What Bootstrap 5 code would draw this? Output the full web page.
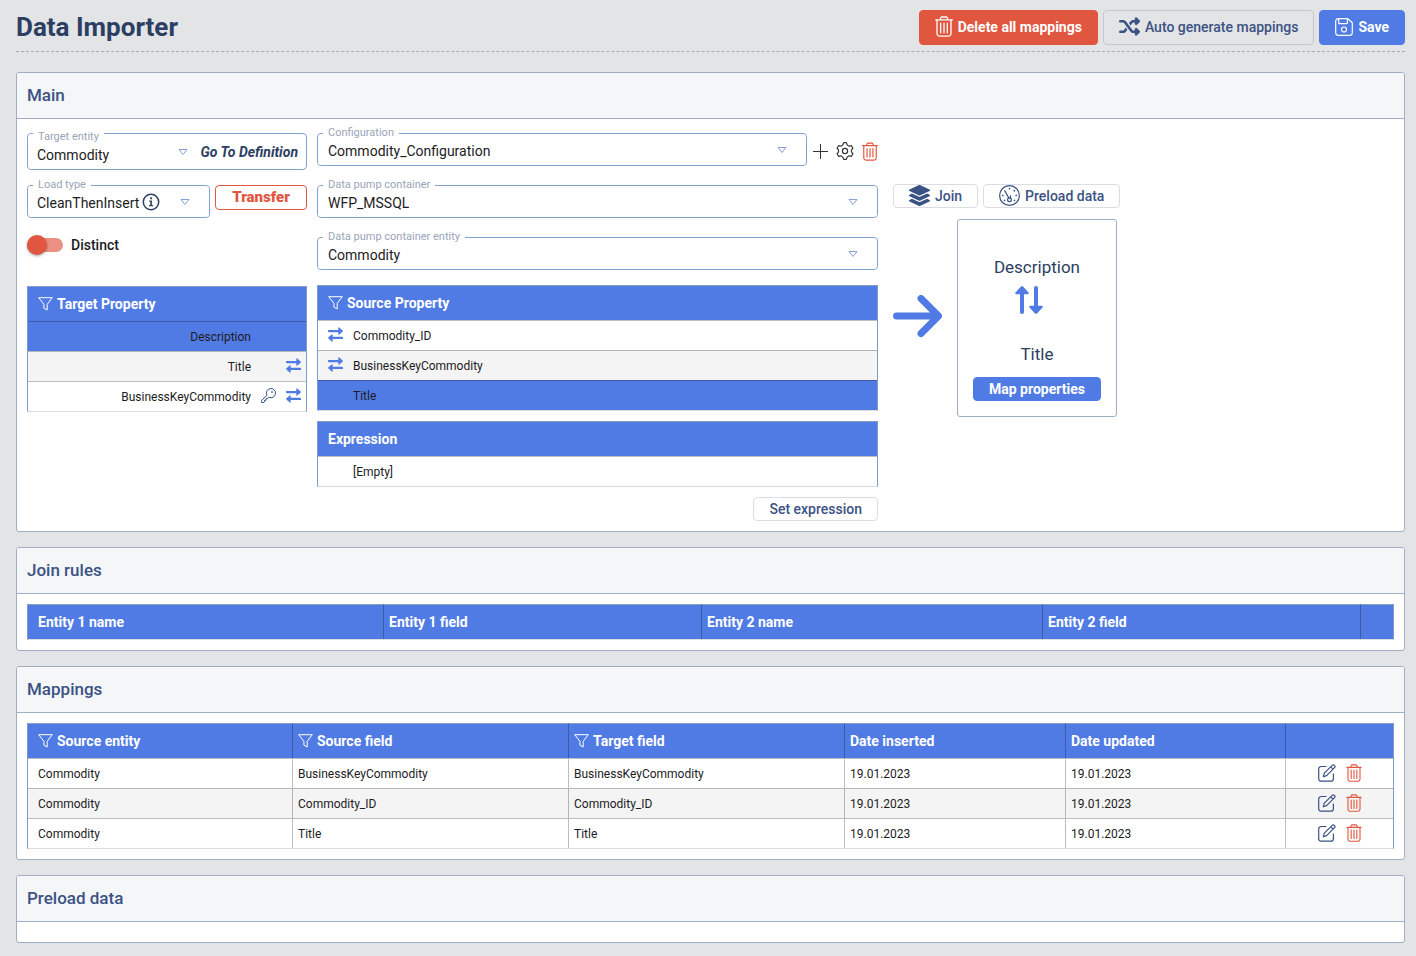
<!DOCTYPE html>
<html lang="en">
<head>
<meta charset="utf-8">
<meta name="viewport" content="width=device-width, initial-scale=1">
<title>Data Importer</title>
<link href="https://cdn.jsdelivr.net/npm/bootstrap@5.3.0/dist/css/bootstrap.min.css" rel="stylesheet">
<style>
  :root { --brand: #517be4; --danger: #e1563f; --navy: #2c3e62; --ink: #3b5284; --edge: #a0adc2; --field: #849fd2; }
  body { background: #e3e4e6; font-family: Roboto, "Liberation Sans", sans-serif; font-size: 14px; line-height: 20px; color: #1c1c1e; }
  svg { display: block; flex: none; }
  .page { padding: 10px 11px 13px 16px; }
  .page-head { border-bottom: 1px dashed #a9abae; padding-bottom: 6px; margin-bottom: 20px; }
  .page-head h1 { font-size: 26px; line-height: 35px; font-weight: 700; color: var(--navy); }

  .btn { --bs-btn-font-size: 14px; --bs-btn-font-weight: 500; --bs-btn-line-height: 22px; --bs-btn-padding-x: 15px; --bs-btn-padding-y: 0px; --bs-btn-border-radius: 4px; gap: 5px; }
  .btn-tall { --bs-btn-line-height: 33px; }
  .btn-tall svg { margin-bottom: 2px; }
  .btn-brand { --bs-btn-color: #fff; --bs-btn-bg: var(--brand); --bs-btn-border-color: var(--brand); --bs-btn-font-weight: 700; --bs-btn-hover-color: #fff; --bs-btn-hover-bg: #3f69d2; }
  .btn-alert { --bs-btn-color: #fff; --bs-btn-bg: var(--danger); --bs-btn-border-color: var(--danger); --bs-btn-font-weight: 700; --bs-btn-hover-color: #fff; --bs-btn-hover-bg: #c94630; }
  .btn-plain { --bs-btn-color: var(--ink); --bs-btn-border-color: #dcdde0; --bs-btn-hover-border-color: var(--ink); }
  .page-head .btn-plain { --bs-btn-border-color: #c6c8cb; }
  .btn-transfer { --bs-btn-color: var(--danger); --bs-btn-border-color: var(--danger); --bs-btn-font-size: 15px; --bs-btn-font-weight: 900; --bs-btn-padding-x: 16px; --bs-btn-hover-color: var(--danger); }
  .icon-btn { border: 0; padding: 0; background: none; color: #333; }
  .icon-btn.red { color: var(--danger); }
  .icon-btn.blue { color: var(--ink); }

  .card { --bs-card-border-color: var(--edge); --bs-card-border-radius: 3px; --bs-card-inner-border-radius: 2px; --bs-card-cap-bg: #f5f6f8; --bs-card-cap-padding-x: 10px; --bs-card-cap-padding-y: 0px; --bs-card-spacer-x: 10px; --bs-card-spacer-y: 10px; margin-bottom: 15px; }
  .card-header h2 { font-size: 17px; line-height: 45px; font-weight: 500; color: var(--ink); margin: 0; }

  .main-grid { display: grid; grid-template-columns: 280px minmax(0, 561fr) minmax(0, 506fr); column-gap: 10px; }
  .main-grid > div { padding-top: 4px; }
  .main-grid > .flow-col { padding: 55px 0 0 5px; }
  .load-row { display: grid; grid-template-columns: minmax(0, 1fr) 92px; gap: 5px; align-items: start; margin-top: 15px; }
  .load-row .btn { --bs-btn-padding-x: 0px; --bs-btn-line-height: 23px; }

  .field { position: relative; border: 1px solid var(--field); border-radius: 4px; display: flex; align-items: center; height: 33px; }
  .field label { position: absolute; left: 5px; top: -7px; padding: 0 5px; background: #fff; font-size: 11px; line-height: 12px; color: #9aa5b9; white-space: nowrap; z-index: 1; }
  .field select { appearance: none; border: 0; outline: 0; flex: 1; min-width: 0; height: 31px; padding: 3px 34px 0 10px; border-radius: 4px; color: #1c1c1e;
    background: #fff url("data:image/svg+xml,%3Csvg xmlns='http://www.w3.org/2000/svg' width='10' height='8'%3E%3Cpath d='M1 1.500h8L5 6.500z' fill='none' stroke='%2386a0d6' stroke-linejoin='round'/%3E%3C/svg%3E") no-repeat right 19px center; }
  .field-tall { height: 37px; }
  .field-tall label { top: -3px; }
  .field-tall select { height: 35px; padding: 7px 16px 0 9px; background-position: right 1px center; }
  .field-tall a { font-weight: 700; font-style: italic; color: var(--navy); text-decoration: none; padding: 0 8px 0 12px; white-space: nowrap; }
  .load-row .field select { padding-left: 9px; }
  .info-mark { position: absolute; left: 114px; top: 7px; color: var(--navy); }

  .toggle { appearance: none; position: relative; width: 36px; height: 20px; margin: 0; flex: none; cursor: pointer; }
  .toggle::before { content: ""; position: absolute; inset: 3px 0; border-radius: 7px; background: #ea9084; }
  .toggle::after { content: ""; position: absolute; left: 0; top: 0; width: 20px; height: 20px; border-radius: 50%; background: var(--danger); box-shadow: 0 1px 3px rgba(0,0,0,.35); }
  .toggle:checked::after { left: 16px; }

  .grid-table { width: 100%; table-layout: fixed; border-collapse: separate; border-spacing: 0; border: solid #8199cb; border-width: 0 1px; border-bottom: 1px solid #dcdcdc; font-size: 12px; }
  .grid-table th { height: 35px; background: var(--brand); color: #fff; font-size: 14px; font-weight: 700; padding: 0 5px; border-top: 1px solid #8b9ec4; }
  .grid-table td { height: 30px; padding: 0 5px; border-top: 1px solid rgba(0,0,0,.26); background: #fff; }
  .grid-table th + th, .grid-table td + td { border-left: 1px solid rgba(0,0,0,.26); }
  .grid-table th:first-child, .grid-table td:first-child { padding-left: 10px; }
  .grid-table tbody tr:nth-child(even) td { background: #f4f4f4; }
  .grid-table tbody tr.picked td { background: var(--brand); }
  .grid-table td svg { margin-bottom: 2px; }
  .th-label { display: flex; align-items: center; gap: 4px; }
  .th-label svg { margin-bottom: 1px; }
  .slot { width: 15px; flex: none; color: var(--brand); }
  .slot.key { color: var(--ink); }

  .pair-box { border: 1px solid var(--edge); border-radius: 3px; padding: 37px 15px 15px; font-size: 17px; color: var(--navy); text-align: center; }
</style>
</head>
<body>
<svg class="d-none" aria-hidden="true">
  <symbol id="i-trash" viewBox="0 0 18 21"><g fill="none" stroke="currentColor" stroke-width="1.3" stroke-linecap="round" stroke-linejoin="round"><path d="M.7 3.900h16.600M5 3.700l.7-1.800Q6 1 7 1h4q1 0 1.300.900L13 3.700M2 4v13.500a2.700 2.700 0 0 0 2.700 2.700h8.600a2.700 2.700 0 0 0 2.700-2.700V4M5.700 7.200v9.600M9 7.200v9.600M12.300 7.200v9.600"/></g></symbol>
  <symbol id="i-funnel" viewBox="0 0 15 14"><path d="M.7.700h13.600L9.200 7.300v5.700l-3.300-1.800V7.300z" fill="none" stroke="currentColor" stroke-linejoin="round"/></symbol>
  <symbol id="i-swap" viewBox="0 0 15 15"><path d="M.9 3H10.300V1.100q0-1.300 1-.5L14.600 3.500q.6.600 0 1.200L11.300 7.400q-1 .700-1-.500V5.200H.9a1.100 1.100 0 0 1 0-2.200zM14.100 9.800H4.700V8q0-1.200-1-.500L.4 10.300q-.6.600 0 1.200l3.300 2.900q1 .800 1-.500V12h9.400a1.100 1.100 0 0 0 0-2.200z" fill="currentColor"/></symbol>
  <symbol id="i-edit" viewBox="0 0 18 18"><g fill="none" stroke="currentColor" stroke-width="1.200" stroke-linecap="round" stroke-linejoin="round"><path d="M8 2.500H3.200A2.500 2.500 0 0 0 .7 5v9.700a2.500 2.500 0 0 0 2.500 2.500h9.700a2.500 2.500 0 0 0 2.500-2.500V10M5.300 12.800l1-3.600 7.900-7.900q1-1 2.200.1 1.200 1.200.1 2.300l-7.900 7.900zM12.800 2.800l2.300 2.300"/></g></symbol>
</svg>

<div class="page">
  <header class="page-head d-flex flex-wrap justify-content-between">
    <h1 class="m-0">Data Importer</h1>
    <div class="d-flex flex-wrap" style="gap:5px">
      <button type="button" class="btn btn-alert btn-tall d-inline-flex align-items-center"><svg width="18" height="21" aria-hidden="true"><use href="#i-trash"/></svg>Delete all mappings</button>
      <button type="button" class="btn btn-plain btn-tall d-inline-flex align-items-center"><svg width="21" height="21" viewBox="0 0 512 512" fill="currentColor" aria-hidden="true"><path d="M403.800 34.400c12-5 25.700-2.200 34.900 6.900l64 64c6 6 9.400 14.100 9.400 22.600s-3.400 16.600-9.400 22.600l-64 64c-9.200 9.200-22.900 11.900-34.900 6.900s-19.800-16.600-19.800-29.600V160H352c-10.100 0-19.600 4.700-25.600 12.800L284 229.300 244 176l31.200-41.600C293.300 110.200 321.800 96 352 96h32V64c0-12.900 7.800-24.600 19.800-29.600zM164 282.700L204 336l-31.200 41.600C154.700 401.800 126.200 416 96 416H32c-17.700 0-32-14.300-32-32s14.300-32 32-32H96c10.100 0 19.600-4.700 25.600-12.800L164 282.700zm274.600 188c-9.200 9.200-22.900 11.900-34.900 6.900s-19.800-16.600-19.800-29.600V416H352c-30.200 0-58.700-14.200-76.800-38.400L121.600 172.800c-6-8.100-15.500-12.800-25.600-12.800H32c-17.700 0-32-14.300-32-32s14.300-32 32-32H96c30.200 0 58.700 14.200 76.800 38.400L326.400 339.200c6 8.100 15.500 12.800 25.600 12.800h32V320c0-12.900 7.800-24.600 19.800-29.600s25.700-2.200 34.900 6.900l64 64c6 6 9.400 14.100 9.400 22.600s-3.400 16.600-9.400 22.600l-64 64z"/></svg>Auto generate mappings</button>
      <button type="button" class="btn btn-brand btn-tall d-inline-flex align-items-center"><svg width="18" height="18" viewBox="0 0 18 18" fill="none" stroke="currentColor" stroke-width="1.200" stroke-linejoin="round" aria-hidden="true"><path d="M3.200.7h9.600l4.500 4v10.100a2.500 2.500 0 0 1-2.500 2.500H3.200a2.500 2.500 0 0 1-2.500-2.500V3.200A2.500 2.500 0 0 1 3.200.7zM3.700.900v3.900q0 .9.900.9h6.900q.9 0 .9-.9V.900"/><circle cx="9" cy="11.500" r="2.500"/></svg>Save</button>
    </div>
  </header>

  <section class="card">
    <div class="card-header"><h2>Main</h2></div>
    <div class="card-body main-grid">
      <div>
        <div class="field field-tall">
          <label for="target">Target entity</label>
          <select id="target"><option>Commodity</option></select>
          <a href="#definition">Go To Definition</a>
        </div>
        <div class="load-row">
          <div class="field">
            <label for="load">Load type</label>
            <select id="load"><option>CleanThenInsert</option></select>
            <svg class="info-mark" width="18" height="18" viewBox="0 0 18 18" aria-hidden="true"><circle cx="9" cy="9" r="7.700" fill="none" stroke="currentColor" stroke-width="1.500"/><path d="M7.200 7.500h2.700v4.600h1.200v1.200H7v-1.200h1.300V8.700H7.200z" fill="currentColor"/><circle cx="9.100" cy="5.300" r="1.100" fill="currentColor"/></svg>
          </div>
          <button type="button" class="btn btn-transfer">Transfer</button>
        </div>
        <div class="d-flex align-items-center" style="height:24px;gap:8px;margin:15px 0 29px">
          <input type="checkbox" role="switch" class="toggle" id="distinct">
          <label for="distinct" style="font-weight:500">Distinct</label>
        </div>
        <table class="grid-table">
          <thead><tr><th><span class="th-label"><svg width="15" height="14" aria-hidden="true"><use href="#i-funnel"/></svg>Target Property</span></th></tr></thead>
          <tbody>
            <tr class="picked"><td><div class="d-flex justify-content-end align-items-center" style="gap:10px">Description<span class="slot"></span><span class="slot"></span></div></td></tr>
            <tr><td><div class="d-flex justify-content-end align-items-center" style="gap:10px">Title<span class="slot"></span><span class="slot"><svg width="15" height="15" aria-hidden="true"><use href="#i-swap"/></svg></span></div></td></tr>
            <tr><td><div class="d-flex justify-content-end align-items-center" style="gap:10px">BusinessKeyCommodity<span class="slot key"><svg width="15" height="15" viewBox="0 0 15 15" fill="none" stroke="currentColor" stroke-linejoin="round" aria-hidden="true"><path d="M5.900 7.300A4.600 4.600 0 1 1 8 9.300L6.600 10.600H5v1.700H3.500v1.600l-.6.600H.6v-2.100z"/><circle cx="11" cy="4" r=".5"/></svg></span><span class="slot"><svg width="15" height="15" aria-hidden="true"><use href="#i-swap"/></svg></span></div></td></tr>
          </tbody>
        </table>
      </div>

      <div>
        <div class="d-flex align-items-center">
          <div class="field flex-fill">
            <label for="config">Configuration</label>
            <select id="config"><option>Commodity_Configuration</option></select>
          </div>
          <div class="d-flex align-items-center" style="gap:8px;margin-left:6px;padding-top:3px">
            <button type="button" class="icon-btn" aria-label="Add"><svg width="15" height="15" viewBox="0 0 15 15" stroke="currentColor"><path d="M7.500 0v15M0 7.500h15"/></svg></button>
            <button type="button" class="icon-btn" aria-label="Settings"><svg width="18" height="18" viewBox="0 0 18 18" fill="none" stroke="currentColor" stroke-width="1.200" stroke-linejoin="round"><path d="M7.700.7h2.600q.6 2.500 1.900 3.100 1.100.600 3.100-.3l1.600 2.700Q15.300 7.700 15.300 9t1.600 2.800l-1.600 2.700q-2-.9-3.100-.3-1.300.600-1.900 3.100H7.700q-.6-2.500-1.900-3.100-1.100-.600-3.100.3l-1.600-2.700Q2.700 10.300 2.700 9T1.100 6.200l1.600-2.700q2 .9 3.100.3Q7.100 3.200 7.700.7z"/><circle cx="9" cy="9" r="2.600"/></svg></button>
            <button type="button" class="icon-btn red" aria-label="Delete configuration"><svg width="16" height="19"><use href="#i-trash"/></svg></button>
          </div>
        </div>
        <div class="field" style="margin-top:19px">
          <label for="container">Data pump container</label>
          <select id="container"><option>WFP_MSSQL</option></select>
        </div>
        <div class="field" style="margin:19px 0 15px">
          <label for="entity">Data pump container entity</label>
          <select id="entity"><option>Commodity</option></select>
        </div>
        <table class="grid-table">
          <thead><tr><th><span class="th-label"><svg width="15" height="14" aria-hidden="true"><use href="#i-funnel"/></svg>Source Property</span></th></tr></thead>
          <tbody>
            <tr><td><div class="d-flex align-items-center" style="gap:10px"><span class="slot"><svg width="15" height="15" aria-hidden="true"><use href="#i-swap"/></svg></span>Commodity_ID</div></td></tr>
            <tr><td><div class="d-flex align-items-center" style="gap:10px"><span class="slot"><svg width="15" height="15" aria-hidden="true"><use href="#i-swap"/></svg></span>BusinessKeyCommodity</div></td></tr>
            <tr class="picked"><td><div class="d-flex align-items-center" style="gap:10px"><span class="slot"></span>Title</div></td></tr>
          </tbody>
        </table>
        <table class="grid-table" style="margin:10px 0">
          <thead><tr><th>Expression</th></tr></thead>
          <tbody><tr><td><div class="d-flex" style="gap:10px"><span class="slot"></span>[Empty]</div></td></tr></tbody>
        </table>
        <div class="d-flex justify-content-end"><button type="button" class="btn btn-plain">Set expression</button></div>
      </div>

      <div class="flow-col">
        <div class="d-flex flex-wrap" style="gap:5px;margin-bottom:11px">
          <button type="button" class="btn btn-plain d-inline-flex"><svg width="21" height="21" viewBox="0 0 512 512" fill="currentColor" aria-hidden="true"><path d="M12.410 148.020l232.940 105.670c6.800 3.090 14.490 3.090 21.290 0l232.940-105.670c16.550-7.510 16.550-32.520 0-40.030L266.650 2.310a25.607 25.607 0 0 0-21.290 0L12.410 107.980c-16.550 7.510-16.550 32.530 0 40.040zm487.180 88.280l-58.090-26.330-161.640 73.270c-7.560 3.430-15.590 5.170-23.860 5.170s-16.290-1.740-23.860-5.170L70.510 209.970l-58.100 26.330c-16.550 7.500-16.550 32.500 0 40l232.940 105.590c6.800 3.080 14.490 3.080 21.290 0L499.590 276.300c16.550-7.500 16.550-32.500 0-40zm0 127.800l-57.870-26.230-161.860 73.370c-7.560 3.430-15.590 5.170-23.860 5.170s-16.290-1.740-23.860-5.170L70.290 337.870 12.410 364.100c-16.550 7.500-16.550 32.500 0 40l232.940 105.590c6.800 3.080 14.490 3.080 21.290 0L499.590 404.100c16.550-7.500 16.550-32.500 0-40z"/></svg>Join</button>
          <button type="button" class="btn btn-plain d-inline-flex"><svg width="21" height="21" viewBox="0 0 21 21" fill="none" stroke="currentColor" stroke-linecap="round" aria-hidden="true"><circle cx="10.500" cy="10.500" r="9.900" stroke-width="1.200"/><circle cx="10.500" cy="14.800" r="1.900" stroke-width="1.200"/><path d="M9.800 13 5.800 5.800M11.300 13l.3-2" stroke-width="1.300"/><path d="M10.500 3.600v.2M15.300 5.600l-.2.200M17.400 10.500h-.3M3.600 10.500h.3M15.400 15.300l.1.100M5.500 15.400l.1-.1" stroke-width="1.600"/></svg>Preload data</button>
        </div>
        <div class="d-flex align-items-center" style="gap:15px">
          <svg width="49" height="46" viewBox="0 0 49 46" fill="none" stroke="#517be4" stroke-width="7" stroke-linecap="round" stroke-linejoin="round" aria-hidden="true"><path d="M3.500 21H45M28 3.500 45.500 21 28 38.500"/></svg>
          <div class="pair-box">
            <div>Description</div>
            <svg class="mx-auto" style="margin-top:9px" width="43" height="28" viewBox="0 0 43 28" aria-hidden="true"><path d="M6 .5q1-.9 2 0l5.500 5.900q1 1.600-.8 1.800H9V26a2 2 0 0 1-4 0V8.200H1.300Q-.5 8 .5 6.400zM20 27.500q1 .9 2 0l5.500-5.900q1-1.600-.8-1.800H23V2a2 2 0 0 0-4 0v17.800h-3.700q-1.800.2-.8 1.800z" fill="#517be4"/></svg>
            <div style="margin:30px 0 13px">Title</div>
            <button type="button" class="btn btn-brand">Map properties</button>
          </div>
        </div>
      </div>
    </div>
  </section>

  <section class="card">
    <div class="card-header"><h2>Join rules</h2></div>
    <div class="card-body">
      <table class="grid-table">
        <colgroup><col style="width:355px"><col style="width:318px"><col style="width:341px"><col style="width:318px"><col style="width:33px"></colgroup>
        <thead><tr><th>Entity 1 name</th><th>Entity 1 field</th><th>Entity 2 name</th><th>Entity 2 field</th><th></th></tr></thead>
      </table>
    </div>
  </section>

  <section class="card">
    <div class="card-header"><h2>Mappings</h2></div>
    <div class="card-body">
      <table class="grid-table">
        <colgroup><col style="width:264px"><col style="width:276px"><col style="width:276px"><col style="width:221px"><col style="width:220px"><col style="width:108px"></colgroup>
        <thead><tr>
          <th><span class="th-label"><svg width="15" height="14" aria-hidden="true"><use href="#i-funnel"/></svg>Source entity</span></th>
          <th><span class="th-label"><svg width="15" height="14" aria-hidden="true"><use href="#i-funnel"/></svg>Source field</span></th>
          <th><span class="th-label"><svg width="15" height="14" aria-hidden="true"><use href="#i-funnel"/></svg>Target field</span></th>
          <th>Date inserted</th><th>Date updated</th><th></th>
        </tr></thead>
        <tbody>
          <tr><td>Commodity</td><td>BusinessKeyCommodity</td><td>BusinessKeyCommodity</td><td>19.01.2023</td><td>19.01.2023</td>
            <td><div class="d-flex justify-content-center" style="gap:10px"><button type="button" class="icon-btn blue" aria-label="Edit"><svg width="18" height="18"><use href="#i-edit"/></svg></button><button type="button" class="icon-btn red" aria-label="Delete"><svg width="16" height="18"><use href="#i-trash"/></svg></button></div></td></tr>
          <tr><td>Commodity</td><td>Commodity_ID</td><td>Commodity_ID</td><td>19.01.2023</td><td>19.01.2023</td>
            <td><div class="d-flex justify-content-center" style="gap:10px"><button type="button" class="icon-btn blue" aria-label="Edit"><svg width="18" height="18"><use href="#i-edit"/></svg></button><button type="button" class="icon-btn red" aria-label="Delete"><svg width="16" height="18"><use href="#i-trash"/></svg></button></div></td></tr>
          <tr><td>Commodity</td><td>Title</td><td>Title</td><td>19.01.2023</td><td>19.01.2023</td>
            <td><div class="d-flex justify-content-center" style="gap:10px"><button type="button" class="icon-btn blue" aria-label="Edit"><svg width="18" height="18"><use href="#i-edit"/></svg></button><button type="button" class="icon-btn red" aria-label="Delete"><svg width="16" height="18"><use href="#i-trash"/></svg></button></div></td></tr>
        </tbody>
      </table>
    </div>
  </section>

  <section class="card mb-0">
    <div class="card-header"><h2>Preload data</h2></div>
    <div class="card-body"></div>
  </section>
</div>
<script src="https://cdn.jsdelivr.net/npm/bootstrap@5.3.0/dist/js/bootstrap.bundle.min.js"></script>
</body>
</html>
